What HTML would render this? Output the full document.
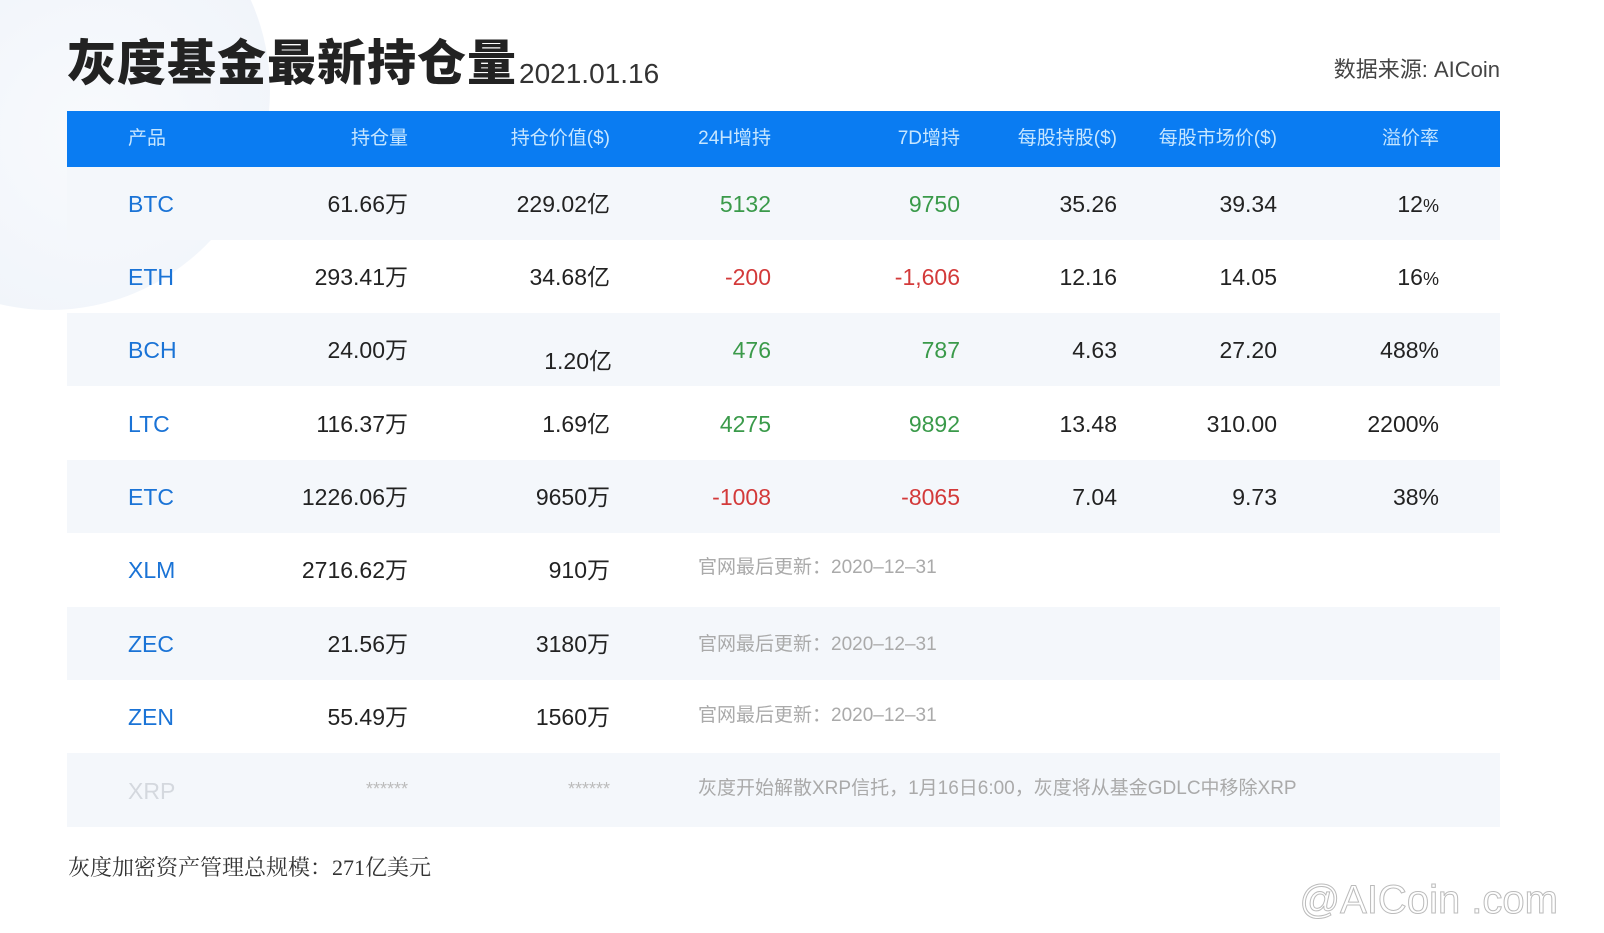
<!DOCTYPE html>
<html><head><meta charset="utf-8"><style>
*{margin:0;padding:0;box-sizing:border-box}
body{width:1604px;height:933px;background:#fff;position:relative;overflow:hidden;font-family:"Liberation Sans","Noto Sans CJK SC",sans-serif;color:#222}
.abs{position:absolute;white-space:nowrap}
.deco{position:absolute;left:-170px;top:-130px;width:440px;height:440px;border-radius:50%;background:radial-gradient(circle at 60% 60%,#f8fafd 0,#f0f4fa 60%,#f8fafd 100%)}
.title{left:67px;top:34px;font-size:49px;font-weight:900;color:#222;letter-spacing:1px;line-height:60px}
.date{left:519px;top:57px;font-size:28px;color:#333;line-height:34px}
.src{right:104px;top:56px;font-size:22px;color:#444;line-height:28px}
.hdr{position:absolute;left:67px;top:111px;width:1433px;height:56px;background:#0a7cf2}
.row{position:absolute;left:67px;width:1433px;height:73px}
.alt{background:#f4f7fb}
.c{position:absolute;white-space:nowrap;font-size:23px;line-height:30px}
.h{color:#c6e6ff;font-size:19px;top:124px}
.g{color:#3a9a4a}.r{color:#d33a3a}.b{color:#1a73d6}
.note{color:#aaa;font-size:19px}
.foot{left:68px;top:853px;font-size:22px;font-family:"Liberation Serif","Noto Serif CJK SC",serif;color:#333;line-height:30px}
.wm{right:46px;top:876px;font-size:40px;color:#fff;-webkit-text-stroke:1px #bbb;line-height:48px}
</style></head><body>
<div class="deco"></div>
<div class="abs title">灰度基金最新持仓量</div>
<div class="abs date">2021.01.16</div>
<div class="abs src">数据来源: AICoin</div>
<div class="hdr"></div>
<div class="c h" style="left:128px">产品</div>
<div class="c h" style="right:1196px">持仓量</div>
<div class="c h" style="right:994px">持仓价值($)</div>
<div class="c h" style="right:833px">24H增持</div>
<div class="c h" style="right:644px">7D增持</div>
<div class="c h" style="right:487px">每股持股($)</div>
<div class="c h" style="right:327px">每股市场价($)</div>
<div class="c h" style="right:165px">溢价率</div>

<div class="row alt" style="top:167px"></div>
<div class="row" style="top:240px"></div>
<div class="row alt" style="top:313px"></div>
<div class="row" style="top:387px"></div>
<div class="row alt" style="top:460px"></div>
<div class="row" style="top:533px"></div>
<div class="row alt" style="top:607px"></div>
<div class="row" style="top:680px"></div>
<div class="row alt" style="top:753px;height:74px"></div>

<div class="c b" style="left:128px;top:189px">BTC</div>
<div class="c" style="right:1196px;top:189px">61.66万</div>
<div class="c" style="right:994px;top:189px">229.02亿</div>
<div class="c g" style="right:833px;top:189px">5132</div>
<div class="c g" style="right:644px;top:189px">9750</div>
<div class="c" style="right:487px;top:189px">35.26</div>
<div class="c" style="right:327px;top:189px">39.34</div>
<div class="c" style="right:165px;top:189px">12<span style="font-size:18px">%</span></div>

<div class="c b" style="left:128px;top:262px">ETH</div>
<div class="c" style="right:1196px;top:262px">293.41万</div>
<div class="c" style="right:994px;top:262px">34.68亿</div>
<div class="c r" style="right:833px;top:262px">-200</div>
<div class="c r" style="right:644px;top:262px">-1,606</div>
<div class="c" style="right:487px;top:262px">12.16</div>
<div class="c" style="right:327px;top:262px">14.05</div>
<div class="c" style="right:165px;top:262px">16<span style="font-size:18px">%</span></div>

<div class="c b" style="left:128px;top:335px">BCH</div>
<div class="c" style="right:1196px;top:335px">24.00万</div>
<div class="c" style="right:992px;top:346px">1.20亿</div>
<div class="c g" style="right:833px;top:335px">476</div>
<div class="c g" style="right:644px;top:335px">787</div>
<div class="c" style="right:487px;top:335px">4.63</div>
<div class="c" style="right:327px;top:335px">27.20</div>
<div class="c" style="right:165px;top:335px">488%</div>

<div class="c b" style="left:128px;top:409px">LTC</div>
<div class="c" style="right:1196px;top:409px">116.37万</div>
<div class="c" style="right:994px;top:409px">1.69亿</div>
<div class="c g" style="right:833px;top:409px">4275</div>
<div class="c g" style="right:644px;top:409px">9892</div>
<div class="c" style="right:487px;top:409px">13.48</div>
<div class="c" style="right:327px;top:409px">310.00</div>
<div class="c" style="right:165px;top:409px">2200%</div>

<div class="c b" style="left:128px;top:482px">ETC</div>
<div class="c" style="right:1196px;top:482px">1226.06万</div>
<div class="c" style="right:994px;top:482px">9650万</div>
<div class="c r" style="right:833px;top:482px">-1008</div>
<div class="c r" style="right:644px;top:482px">-8065</div>
<div class="c" style="right:487px;top:482px">7.04</div>
<div class="c" style="right:327px;top:482px">9.73</div>
<div class="c" style="right:165px;top:482px">38%</div>

<div class="c b" style="left:128px;top:555px">XLM</div>
<div class="c" style="right:1196px;top:555px">2716.62万</div>
<div class="c" style="right:994px;top:555px">910万</div>
<div class="c note" style="left:698px;top:553px">官网最后更新：2020–12–31</div>

<div class="c b" style="left:128px;top:629px">ZEC</div>
<div class="c" style="right:1196px;top:629px">21.56万</div>
<div class="c" style="right:994px;top:629px">3180万</div>
<div class="c note" style="left:698px;top:630px">官网最后更新：2020–12–31</div>

<div class="c b" style="left:128px;top:702px">ZEN</div>
<div class="c" style="right:1196px;top:702px">55.49万</div>
<div class="c" style="right:994px;top:702px">1560万</div>
<div class="c note" style="left:698px;top:701px">官网最后更新：2020–12–31</div>

<div class="c" style="left:128px;top:776px;color:#d4d8de">XRP</div>
<div class="c" style="right:1196px;top:774px;color:#bbb;font-size:18px">******</div>
<div class="c" style="right:994px;top:774px;color:#bbb;font-size:18px">******</div>
<div class="c note" style="left:698px;top:774px">灰度开始解散XRP信托，1月16日6:00，灰度将从基金GDLC中移除XRP</div>

<div class="abs foot">灰度加密资产管理总规模：271亿美元</div>
<div class="abs wm">@AICoin .com</div>
</body></html>
